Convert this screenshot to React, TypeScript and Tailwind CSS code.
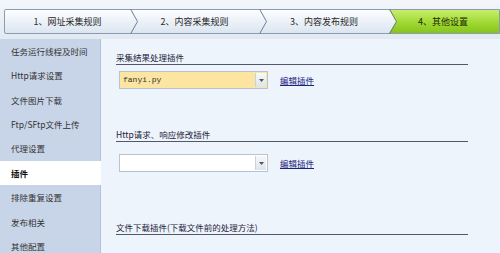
import React from "react";

const cjk = { fontFamily: '"SimSun","Noto Sans CJK SC","Liberation Sans",sans-serif' };
const mono = { fontFamily: '"Liberation Mono","Noto Sans CJK SC",monospace' };

function Chevron({ left }: { left: number }) {
  return (
    <svg
      className="absolute top-[-1px]"
      style={{ left }}
      width="10"
      height="25"
      viewBox="0 0 10 25"
    >
      <polyline points="0.5,0 7.5,12.5 0.5,25" fill="none" stroke="#6d7f96" strokeWidth="1" />
    </svg>
  );
}

function Dropdown({ value, yellow }: { value?: string; yellow?: boolean }) {
  return (
    <div
      className={`flex h-[18px] w-[149px] border border-[#b7c3d3] ${yellow ? "bg-[#fbe5a0]" : "bg-white"}`}
    >
      <div className="flex-1 flex items-center pl-[3px] text-[8px] text-[#333]" style={mono}>
        {value}
      </div>
      <div className="w-[11px] my-[1px] mr-[1px] flex items-center justify-center bg-gradient-to-b from-[#f7f9fb] to-[#dde4ec] border-l border-[#c9d2dd]">
        <svg width="5" height="3" viewBox="0 0 5 3">
          <polygon points="0,0 5,0 2.5,3" fill="#555" />
        </svg>
      </div>
    </div>
  );
}

function Section({ title, children }: { title: React.ReactNode; children?: React.ReactNode }) {
  return (
    <div>
      <div className="w-[352px] border-b border-[#52576a] pb-[1px] text-[8.5px] leading-[11px] text-[#1b1b3a]" style={cjk}>
        {title}
      </div>
      {children}
    </div>
  );
}

export default function App() {
  const items = [
    "任务运行线程及时间",
    "Http请求设置",
    "文件图片下载",
    "Ftp/SFtp文件上传",
    "代理设置",
    "插件",
    "排除重复设置",
    "发布相关",
    "其他配置",
  ];
  return (
    <div className="w-[500px] h-[253px] overflow-hidden bg-[#e6edf5] flex flex-col" style={cjk}>
      {/* tabs */}
      <div className="shrink-0 h-[39px] pt-[9px] pl-[4px] bg-gradient-to-b from-[#f3f6fa] to-[#e2e9f2]">
        <div className="relative h-[25px] border border-[#8b9bb0] rounded-l-[2px] bg-gradient-to-b from-[#fdfeff] to-[#dbe5f1] flex text-[9px] text-[#2a2a2a]">
          <div className="w-[125px] flex items-center justify-center">1、网址采集规则</div>
          <div className="w-[129px] flex items-center justify-center">2、内容采集规则</div>
          <div className="w-[130px] flex items-center justify-center">3、内容发布规则</div>
          <div
            className="flex-1 flex items-center justify-center pr-[2px] bg-gradient-to-b from-[#c8ee6c] via-[#a3db35] to-[#86c41c] text-[#1d2a05]"
            style={{ clipPath: "polygon(0 0,100% 0,100% 100%,0 100%,7px 50%)" }}
          >
            4、其他设置
          </div>
          <Chevron left={125} />
          <Chevron left={254} />
          <Chevron left={384} />
        </div>
      </div>
      <div className="flex flex-1 min-h-0">
        {/* sidebar */}
        <div className="w-[101px] shrink-0 bg-[#c8d5e8] border-r border-[#b3c2d6] flex flex-col">
          {items.map((t) => (
            <div
              key={t}
              className={`h-[24.4px] shrink-0 flex items-center pl-[11px] text-[8.5px] ${
                t === "插件" ? "bg-white font-bold text-[#111] mr-[-1px]" : "text-[#333]"
              }`}
              style={cjk}
            >
              {t}
            </div>
          ))}
        </div>
        {/* content */}
        <div className="flex-1 bg-[#eef4fc] pl-[15px] pt-[13px]">
          <Section title="采集结果处理插件">
            <div className="flex items-center mt-[6px] ml-[3px]">
              <Dropdown value="fanyi.py" yellow />
              <span className="ml-[12px] text-[8.5px] text-[#1a237e] underline">编辑插件</span>
            </div>
          </Section>
          <div className="h-[40px]" />
          <Section title="Http请求、响应修改插件">
            <div className="flex items-center mt-[12px] ml-[3px]">
              <Dropdown />
              <span className="ml-[12px] text-[8.5px] text-[#1a237e] underline">编辑插件</span>
            </div>
          </Section>
          <div className="h-[50px]" />
          <Section title="文件下载插件(下载文件前的处理方法)" />
        </div>
      </div>
    </div>
  );
}
